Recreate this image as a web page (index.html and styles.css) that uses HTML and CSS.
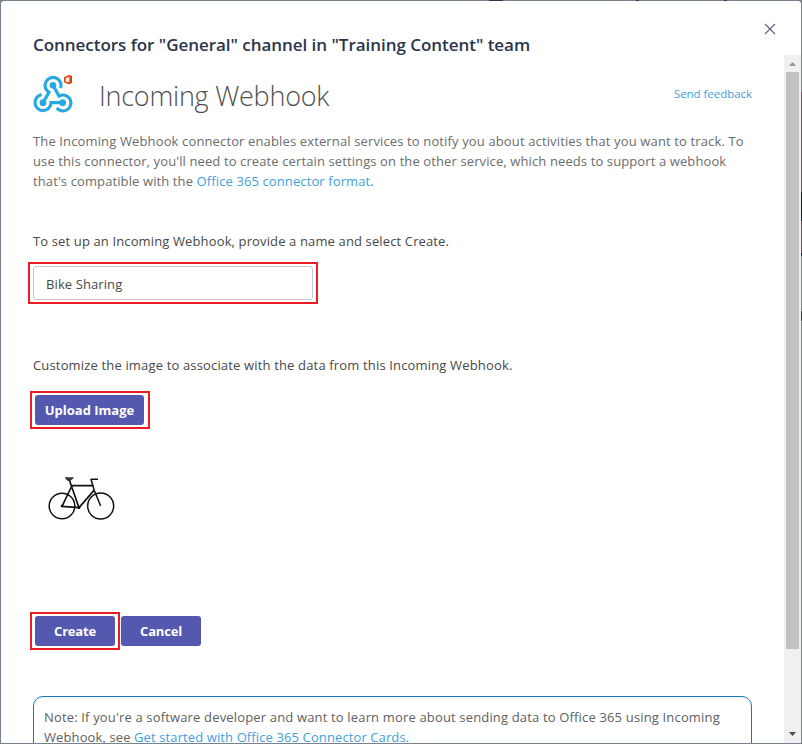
FILE: index.html
```
<!DOCTYPE html>
<html lang="en">
<head>
<meta charset="utf-8">
<title>Incoming Webhook</title>
<link rel="stylesheet" href="styles.css">
</head>
<body>
<div class="backdrop">
  <main class="dialog">
    <header class="dialog-header">
      <h1 class="dialog-title">Connectors for "General" channel in "Training Content" team</h1>
      <button class="close" aria-label="Close"><svg width="12" height="12" viewBox="0 0 12 12"><path d="M1 1l10 10M11 1L1 11"/></svg></button>
    </header>
    <div class="dialog-body">
      <div class="content">
        <div class="brand">
          <svg class="logo" width="40" height="38" viewBox="99 228 120 114">
            <g fill="none" stroke="#28a8e0" stroke-width="9.5">
              <path d="M182 267A24 24 0 1 0 147 280L129 311"/>
              <path d="M125 287A24 24 0 1 0 153 311H188"/>
              <path d="M159 259L177 291A24 24 0 1 1 170 327"/>
            </g>
            <g fill="#28a8e0"><circle cx="159" cy="259" r="10"/><circle cx="129" cy="311" r="10"/><circle cx="188" cy="311" r="10"/></g>
            <path fill="#eb3c00" fill-rule="evenodd" d="M192 235L206 228L216 231V252L206 256L192 250ZM197 237V248L208 250V233Z"/>
          </svg>
          <h2 class="brand-name">Incoming Webhook</h2>
          <a class="feedback">Send feedback</a>
        </div>
        <p class="intro"><span class="l1">The Incoming Webhook connector enables external services to notify you about activities that you want to track. To</span><br><span class="l2">use this connector, you'll need to create certain settings on the other service, which needs to support a webhook</span><br><span class="l3">that's compatible with the <a>Office 365 connector format</a>.</span></p>
        <p class="label name-label">To set up an Incoming Webhook, provide a name and select Create.</p>
        <div class="mark mark-input"><div class="field">Bike Sharing</div></div>
        <p class="label image-label">Customize the image to associate with the data from this Incoming Webhook.</p>
        <div class="mark mark-button mark-upload"><button class="btn upload">Upload Image</button></div>
        <svg class="bike" width="85" height="65" viewBox="0 0 255 195">
          <g fill="none" stroke="#111" stroke-linejoin="round">
            <circle cx="66" cy="123" r="38.500" stroke-width="4.500"/>
            <circle cx="182" cy="123" r="39" stroke-width="4.500"/>
            <path stroke-width="5" d="M88 44L94 62L117 128L66 124L94 66M94 62H160M162 76L117 128"/>
            <path stroke-width="4.500" d="M174 43H153L162 74L182 123"/>
          </g>
          <path fill="#333" d="M75 38Q77 35 83 37L101 37Q103 39 98 42L90 48H84Q76 42 75 38Z"/>
          <circle cx="66" cy="123" r="4"/><circle cx="117" cy="128" r="4"/>
        </svg>
        <div class="actions">
          <div class="mark mark-button"><button class="btn">Create</button></div>
          <button class="btn">Cancel</button>
        </div>
        <div class="note"><span class="n1">Note: If you're a software developer and want to learn more about sending data to Office 365 using Incoming</span><br>Webhook, see <a>Get started with Office 365 Connector Cards.</a></div>
      </div>
      <div class="scrollbar">
        <svg width="17" height="17" viewBox="0 0 17 17"><path fill="#999" d="M5 11h7L8.500 7z"/></svg>
        <div class="thumb"></div>
        <svg class="down" width="17" height="17" viewBox="0 0 17 17"><path fill="#484848" d="M5 6h7L8.500 10z"/></svg>
      </div>
    </div>
  </main>
</div>
</body>
</html>
```
FILE: styles.css
```
* { box-sizing: border-box; }
body { margin: 0; font: 13px/20px "Open Sans", sans-serif; color: #484848; }
h1, h2, p { margin: 0; }
button { border: 0; padding: 0; font: inherit; }
a { color: #409fdf; }
.backdrop {
  width: 802px; height: 744px; padding: 1px; overflow: hidden;
  background:
    linear-gradient(#303749, #303749) 489px 0 / 14px 1px no-repeat,
    linear-gradient(#303749, #303749) 636px 0 / 3px 1px no-repeat,
    linear-gradient(#303749, #303749) 724px 0 / 3px 1px no-repeat,
    linear-gradient(#78818e 0 92px, #80505e 92px 192px, #151e2c 192px 221px, #705760 221px 253px, #151e2c 253px 256px, #7c8794 256px 311px, #343e4b 311px 321px, #78818e 321px) 801px 0 / 1px 744px no-repeat,
    #78818e;
}
.dialog { height: 742px; background: #fff; border-radius: 3px 3px 0 0; display: flex; flex-direction: column; overflow: hidden; }
.dialog-header { height: 54px; flex: none; display: flex; justify-content: space-between; padding: 0 25px 0 32px; }
.dialog-title { margin-top: 32px; font-size: 17px; line-height: 24px; font-weight: 600; color: #2b354b; letter-spacing: -.04px; white-space: nowrap; }
.close { width: 12px; height: 12px; margin-top: 22px; background: none; display: flex; }
.close svg { stroke: #5c6079; fill: none; stroke-width: 1.1; }
.dialog-body { flex: 1; min-height: 0; display: flex; }
.content { flex: 1; padding: 20px 32px 0; overflow: hidden; white-space: nowrap; }
.brand { height: 56px; display: flex; }
.logo { flex: none; }
.brand-name { margin: 1px 0 0 26px; font-size: 27px; line-height: 40px; font-weight: 300; letter-spacing: -.24px; color: #505050; }
.feedback { margin: 9px 0 0 auto; font-size: 11.5px; letter-spacing: -.04px; }
.intro { color: #6c6c6c; height: 60px; }
.l1 { letter-spacing: .134px; }
.l2 { letter-spacing: .112px; }
.l3 { letter-spacing: .11px; }
.label { letter-spacing: .13px; }
.name-label { margin-top: 40px; }
.image-label { margin-top: 51px; letter-spacing: .16px; }
.mark { border: 2px solid #ec1c24; width: max-content; }
.mark-input { margin: 11px 0 0 -5px; padding: 2px 3px; }
.field { width: 280px; height: 34px; border: 1px solid #c8c8c8; border-radius: 3px; padding: 7px 12px 5px; letter-spacing: .1px; }
.mark-button { margin-left: -3px; padding: 2px 3px; }
.mark-upload { margin-top: 16px; padding-right: 4px; }
.btn { display: block; width: 80px; height: 30px; border-radius: 3px; background: #5558af; color: #fff; font-weight: 700; letter-spacing: -.2px; }
.upload { width: 109px; letter-spacing: 0; }
.bike { display: block; margin: 36px 0 0 7px; }
.actions { display: flex; align-items: center; gap: 1px; margin-top: 82px; }
.note { margin-top: 46px; height: 90px; border: 1px solid #1478be; border-radius: 10px; padding: 10px; color: #616161; letter-spacing: .11px; }
.n1 { letter-spacing: .16px; }
.scrollbar { width: 17px; background: #f0f0f0; display: flex; flex-direction: column; align-items: center; flex: none; }
.thumb { width: 13px; height: 577px; background: #c1c1c1; }
.down { margin-top: auto; }
```
